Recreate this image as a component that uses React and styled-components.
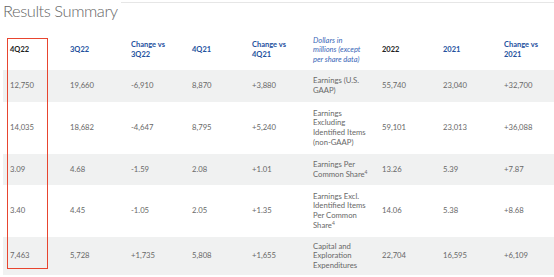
import React from "react";
import styled, { createGlobalStyle } from "styled-components";

const Global = createGlobalStyle`
  html, body { margin: 0; padding: 0; background: #fff; }
  body { font-family: Lato, "Open Sans", sans-serif; }
`;

const Page = styled.div`
  position: relative;
  width: 554px;
  height: 277px;
  overflow: hidden;
  background: #fff;
`;

const TitleBar = styled.div`
  display: flex;
  align-items: flex-start;
  height: 30px;
  padding-left: 3px;
`;

const Title = styled.h1`
  margin: 0;
  margin-top: 1px;
  font-family: Lato, sans-serif;
  font-weight: 300;
  font-size: 16.5px;
  line-height: 20px;
  letter-spacing: -0.45px;
  color: #666;
`;

const TopRule = styled.div`
  flex: 1;
  margin-top: 2px;
  margin-left: 3px;
  border-top: 1px solid #e6e6e6;
`;

const Table = styled.table`
  margin-left: 3px;
  border-collapse: collapse;
  table-layout: fixed;
  width: 551px;
`;

const Col = styled.col`
  width: ${(p) => p.$w}px;
`;

const Row = styled.tr`
  height: ${(p) => p.$h}px;
  background: ${(p) => (p.$shade ? "#f0f1f1" : "#fff")};
`;

const HeadCell = styled.th`
  padding: 0 0 0 7px;
  text-align: left;
  vertical-align: middle;
  font-size: 7.5px;
  line-height: 9.6px;
  font-weight: ${(p) => (p.$italic ? 400 : 700)};
  font-style: ${(p) => (p.$italic ? "italic" : "normal")};
  color: ${(p) => (p.$dark ? "#222" : p.$italic ? "#3a67b8" : "#24519e")};
  white-space: nowrap;
`;

const Cell = styled.td`
  padding: 0 0 0 7px;
  vertical-align: middle;
  font-size: 7.7px;
  line-height: 9.6px;
  color: #686868;
  white-space: nowrap;
`;

const Sup = styled.sup`
  font-size: 5px;
  line-height: 0;
  vertical-align: 3px;
`;

const Highlight = styled.div`
  position: absolute;
  left: 7px;
  top: 38px;
  width: 41px;
  height: 231px;
  box-sizing: border-box;
  border: 1.5px solid #e8452f;
  pointer-events: none;
`;

const widths = [60, 61, 61, 60, 61, 69, 61, 61, 57];

const rows = [
  { h: 32, shade: true, v: ["12,750", "19,660", "-6,910", "8,870", "+3,880"], d: <>Earnings (U.S.<br />GAAP)</>, r: ["55,740", "23,040", "+32,700"] },
  { h: 52, shade: false, v: ["14,035", "18,682", "-4,647", "8,795", "+5,240"], d: <>Earnings<br />Excluding<br />Identified Items<br />(non-GAAP)</>, r: ["59,101", "23,013", "+36,088"] },
  { h: 31, shade: true, v: ["3.09", "4.68", "-1.59", "2.08", "+1.01"], d: <>Earnings Per<br />Common Share<Sup>4</Sup></>, r: ["13.26", "5.39", "+7.87"] },
  { h: 52, shade: false, v: ["3.40", "4.45", "-1.05", "2.05", "+1.35"], d: <>Earnings Excl.<br />Identified Items<br />Per Common<br />Share<Sup>4</Sup></>, r: ["14.06", "5.38", "+8.68"] },
  { h: 38, shade: true, v: ["7,463", "5,728", "+1,735", "5,808", "+1,655"], d: <>Capital and<br />Exploration<br />Expenditures</>, r: ["22,704", "16,595", "+6,109"] },
];

export default function App() {
  return (
    <Page>
      <Global />
      <TitleBar>
        <Title>Results Summary</Title>
        <TopRule />
      </TitleBar>
      <Table>
        <colgroup>
          {widths.map((w, i) => (
            <Col key={i} $w={w} />
          ))}
        </colgroup>
        <thead>
          <Row $h={40}>
            <HeadCell $dark>4Q22</HeadCell>
            <HeadCell>3Q22</HeadCell>
            <HeadCell>Change vs<br />3Q22</HeadCell>
            <HeadCell>4Q21</HeadCell>
            <HeadCell>Change vs<br />4Q21</HeadCell>
            <HeadCell $italic>Dollars in<br />millions (except<br />per share data)</HeadCell>
            <HeadCell $dark>2022</HeadCell>
            <HeadCell>2021</HeadCell>
            <HeadCell>Change vs<br />2021</HeadCell>
          </Row>
        </thead>
        <tbody>
          {rows.map((row, i) => (
            <Row key={i} $h={row.h} $shade={row.shade}>
              {row.v.map((x, j) => (
                <Cell key={j}>{x}</Cell>
              ))}
              <Cell>{row.d}</Cell>
              {row.r.map((x, j) => (
                <Cell key={j}>{x}</Cell>
              ))}
            </Row>
          ))}
        </tbody>
      </Table>
      <Highlight />
    </Page>
  );
}
